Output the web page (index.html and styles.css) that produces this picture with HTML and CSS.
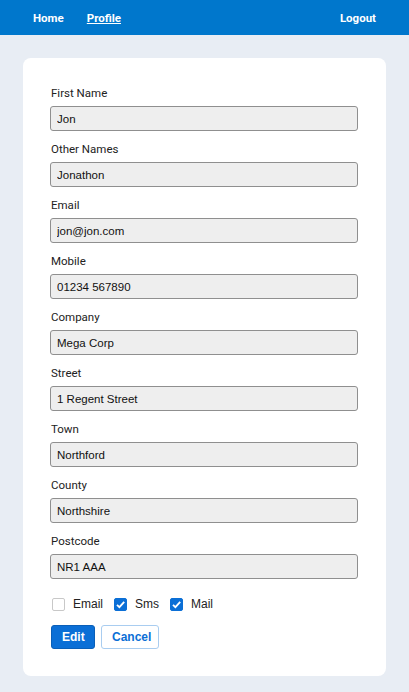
FILE: index.html
```html
<!DOCTYPE html>
<html>
<head>
<meta charset="utf-8">
<link rel="stylesheet" href="styles.css">
</head>
<body>
<nav class="nav">
  <a class="nav-link" href="#">Home</a>
  <a class="nav-link active" href="#">Profile</a>
  <a class="nav-link logout" href="#">Logout</a>
</nav>
<main class="page">
  <form class="card">
    <div class="field"><label>First Name</label><input type="text" value="Jon"></div>
    <div class="field"><label>Other Names</label><input type="text" value="Jonathon"></div>
    <div class="field"><label>Email</label><input type="text" value="jon@jon.com"></div>
    <div class="field"><label>Mobile</label><input type="text" value="01234 567890"></div>
    <div class="field"><label>Company</label><input type="text" value="Mega Corp"></div>
    <div class="field"><label>Street</label><input type="text" value="1 Regent Street"></div>
    <div class="field"><label>Town</label><input type="text" value="Northford"></div>
    <div class="field"><label>County</label><input type="text" value="Northshire"></div>
    <div class="field"><label>Postcode</label><input type="text" value="NR1 AAA"></div>
    <div class="checks">
      <label class="check"><span class="box"></span>Email</label>
      <label class="check"><span class="box on"><svg viewBox="0 0 13 13" width="13" height="13"><path d="M3 6.8 L5.4 9.2 L10.2 3.8" fill="none" stroke="#fff" stroke-width="1.8"/></svg></span>Sms</label>
      <label class="check"><span class="box on"><svg viewBox="0 0 13 13" width="13" height="13"><path d="M3 6.8 L5.4 9.2 L10.2 3.8" fill="none" stroke="#fff" stroke-width="1.8"/></svg></span>Mail</label>
    </div>
    <div class="buttons">
      <button type="button" class="btn primary">Edit</button>
      <button type="button" class="btn secondary">Cancel</button>
    </div>
  </form>
</main>
</body>
</html>
```
FILE: styles.css
```css
* { box-sizing: border-box; }
html, body { margin: 0; padding: 0; }
body {
  background: #e8edf4;
  font-family: Roboto, "Liberation Sans", sans-serif;
  height: 692px;
  overflow: hidden;
}
.nav {
  background: #0077cc;
  height: 35px;
  display: flex;
  align-items: center;
  padding: 0 33px 0 33px;
  gap: 23px;
}
.nav-link {
  color: #fff;
  font-family: Roboto, sans-serif;
  font-weight: 700;
  font-size: 11.5px;
  text-decoration: none;
}
.nav-link.active { text-decoration: underline; }
.nav-link.logout { margin-left: auto; }
.page {
  padding: 23px 23px;
}
.card {
  background: #fff;
  border-radius: 8px;
  padding: 28px 28px 28px 27px;
  height: 618px;
}
.field {
  display: flex;
  flex-direction: column;
  margin-bottom: 11px;
}
.field label {
  font-family: Roboto, sans-serif;
  font-size: 11.5px;
  color: #222;
  line-height: 14px;
  margin-bottom: 6px;
  padding-left: 1px;
}
.field input {
  height: 25px;
  border: 1px solid #8f8f8f;
  border-radius: 3px;
  background: #eeeeee;
  font-family: "Liberation Sans", Arial, sans-serif;
  font-size: 11.5px;
  color: #111;
  padding: 0 6px;
  outline: none;
}
.checks {
  display: flex;
  align-items: center;
  gap: 11px;
  margin-top: 18px;
  padding-left: 2px;
}
.check {
  display: flex;
  align-items: center;
  gap: 8px;
  font-family: "Liberation Sans", Arial, sans-serif;
  font-size: 12px;
  color: #222;
}
.box {
  width: 13px;
  height: 13px;
  border: 1px solid #c8c8c8;
  border-radius: 2px;
  background: #fff;
  display: inline-flex;
}
.box.on {
  background: #0b6fd6;
  border-color: #0b6fd6;
}
.box svg { display: block; margin: -1px; }
.buttons {
  display: flex;
  gap: 6px;
  margin-top: 14px;
  padding-left: 1px;
}
.btn {
  height: 24px;
  border-radius: 3px;
  font-family: "Liberation Sans", Arial, sans-serif;
  font-weight: 700;
  font-size: 12px;
  padding: 0 10px;
  cursor: pointer;
}
.btn.primary {
  background: #0b6fd6;
  border: 1px solid #0a5fb8;
  color: #fff;
  width: 44px;
}
.btn.secondary {
  background: #fff;
  border: 1px solid #a9cdf0;
  color: #0b6fd6;
  width: 58px;
}
```
